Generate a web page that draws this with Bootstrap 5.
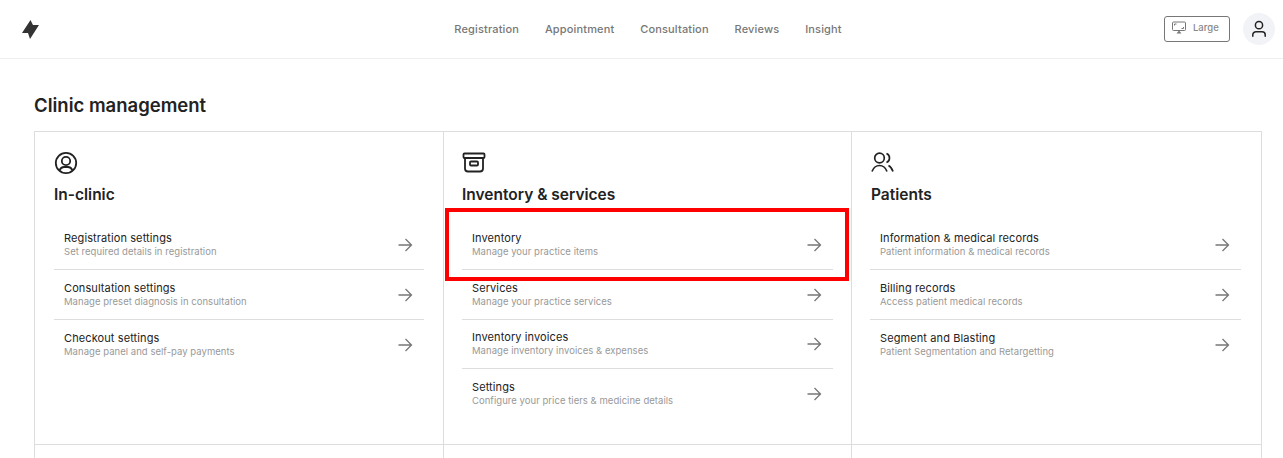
<!DOCTYPE html>
<html lang="en"><head><meta charset="utf-8"><title>Clinic management</title>
<link href="https://cdn.jsdelivr.net/npm/bootstrap@5.3.0/dist/css/bootstrap.min.css" rel="stylesheet">
<style>
html,body{height:458px;overflow:hidden;background:#fff}
body{font-family:Inter,"Liberation Sans",sans-serif;color:#222}
.topbar{height:59px;border-bottom:1px solid #eee;padding:0 8px 0 20px}
.toplink{font-size:11px;font-weight:500;color:#777;text-decoration:none;line-height:14px;letter-spacing:.15px}
.toplinks{gap:25.9px;padding-left:92px}
.sizebtn{width:66px;height:26px;border:1px solid #777;border-radius:3px;font-size:9.5px;font-weight:500;color:#888;gap:7px;padding:0 0 2px 7px}
.avatar{width:32px;height:32px;border-radius:50%;background:#f2f3f6;margin-left:13px}
.pagewrap{padding:35px 21px 0 34px}
.pagetitle{font-size:18.5px;font-weight:600;line-height:22px;color:#222;margin:0 0 15px}
.mgrid{display:grid;grid-template-columns:409px 408px 410px;border:1px solid #ddd;border-bottom:0;width:1228px}
.mcol{height:313px;padding:19px 19px 0 19px;border-right:1px solid #ddd;border-bottom:1px solid #ddd}
.mcol:nth-child(3n){border-right:0}
.mcol-mid{padding-left:18px;padding-right:18px}
.mcol-last{padding-left:18px;padding-right:21px}
.mcol-stub{height:13px;padding:0;border-bottom:0}
.micon{display:block;height:24px;margin:0 0 10px 0}
.mhead{font-size:15.5px;font-weight:600;line-height:20px;margin:0 0 15.5px;color:#222}
.mcol-last .mhead,.mcol-last .micon{margin-left:1px}
.mrow{height:49.5px;border-bottom:1px solid #ddd;padding:1px 11px 0 10px;color:#222;text-decoration:none;position:relative}
.mrow:last-child{border-bottom:0}
.mname{font-size:11px;font-weight:400;line-height:13px;color:#222;letter-spacing:.1px}
.mdesc{font-size:9.5px;line-height:12px;color:#999;margin-top:1px;letter-spacing:.04px}
.redbox{position:absolute;left:-17px;right:-16px;top:-13px;bottom:-12px;border:4px solid #f00;pointer-events:none}
</style></head><body>
<nav class="topbar d-flex align-items-center position-relative">
<svg width="20" height="20" viewBox="0 0 20 20"><path d="M10.500 1 L2 14 H8 L10 20 L19 6 H13 Z" fill="#333"/></svg>
<div class="toplinks d-flex mx-auto">
<a class="toplink" href="#">Registration</a><a class="toplink" href="#">Appointment</a><a class="toplink" href="#">Consultation</a><a class="toplink" href="#">Reviews</a><a class="toplink" href="#">Insight</a>
</div>
<div class="sizebtn d-flex align-items-center">
<svg width="14" height="14" viewBox="0 0 14 14" fill="none" stroke="#777"><rect x=".5" y="1" width="13" height="8.500" rx="1"/><path d="M2.500 4.500V3H4.500M11.500 6v1.500H9.500" stroke-width="1"/><path d="M7 9.500 4.500 12.500h5Z" fill="#777" stroke="none"/></svg>
<span>Large</span></div>
<div class="avatar d-flex align-items-center justify-content-center">
<svg width="20" height="20" viewBox="0 0 20 20" fill="none" stroke="#222" stroke-width="1.500"><circle cx="10" cy="6.200" r="3.600"/><path d="M3.800 17.200v-1.400c0-1.800 1.400-3 3.200-3h6c1.800 0 3.200 1.200 3.200 3v1.400" stroke-linecap="round"/></svg>
</div>
</nav>
<main class="pagewrap">
<h1 class="pagetitle">Clinic management</h1>
<div class="mgrid">
<section class="mcol">
<svg class="micon" width="24" height="24" viewBox="0 0 24 24" fill="none" stroke="#222" stroke-width="1.800"><circle cx="12" cy="12" r="10.200"/><circle cx="12" cy="10" r="4.200"/><path d="M5.500 19.500c1-2.500 3-3.500 4.500-3.500h4c1.500 0 3.500 1 4.500 3.500"/></svg>
<h2 class="mhead">In-clinic</h2>
<a class="mrow d-flex align-items-center justify-content-between" href="#"><div><div class="mname">Registration settings</div><div class="mdesc">Set required details in registration</div></div><svg width="16" height="16" viewBox="0 0 16 16" fill="none" stroke="#777" stroke-width="1.300"><path d="M1.500 8H14.500M8.500 2 14.500 8l-6 6"/></svg></a>
<a class="mrow d-flex align-items-center justify-content-between" href="#"><div><div class="mname">Consultation settings</div><div class="mdesc">Manage preset diagnosis in consultation</div></div><svg width="16" height="16" viewBox="0 0 16 16" fill="none" stroke="#777" stroke-width="1.300"><path d="M1.500 8H14.500M8.500 2 14.500 8l-6 6"/></svg></a>
<a class="mrow d-flex align-items-center justify-content-between" href="#"><div><div class="mname">Checkout settings</div><div class="mdesc">Manage panel and self-pay payments</div></div><svg width="16" height="16" viewBox="0 0 16 16" fill="none" stroke="#777" stroke-width="1.300"><path d="M1.500 8H14.500M8.500 2 14.500 8l-6 6"/></svg></a>
</section>
<section class="mcol mcol-mid">
<svg class="micon" width="24" height="24" viewBox="0 0 24 24" fill="none" stroke="#222" stroke-width="1.800"><rect x="1.500" y="2.500" width="21" height="4.500" rx="1"/><path d="M3 7V17.500a3 3 0 0 0 3 3H18a3 3 0 0 0 3-3V7"/><rect x="8" y="10.500" width="8" height="4" rx="1"/></svg>
<h2 class="mhead">Inventory &amp; services</h2>
<a class="mrow d-flex align-items-center justify-content-between" href="#"><div><div class="mname">Inventory</div><div class="mdesc">Manage your practice items</div></div><svg width="16" height="16" viewBox="0 0 16 16" fill="none" stroke="#777" stroke-width="1.300"><path d="M1.500 8H14.500M8.500 2 14.500 8l-6 6"/></svg><span class="redbox"></span></a>
<a class="mrow d-flex align-items-center justify-content-between" href="#"><div><div class="mname">Services</div><div class="mdesc">Manage your practice services</div></div><svg width="16" height="16" viewBox="0 0 16 16" fill="none" stroke="#777" stroke-width="1.300"><path d="M1.500 8H14.500M8.500 2 14.500 8l-6 6"/></svg></a>
<a class="mrow d-flex align-items-center justify-content-between" href="#"><div><div class="mname">Inventory invoices</div><div class="mdesc">Manage inventory invoices &amp; expenses</div></div><svg width="16" height="16" viewBox="0 0 16 16" fill="none" stroke="#777" stroke-width="1.300"><path d="M1.500 8H14.500M8.500 2 14.500 8l-6 6"/></svg></a>
<a class="mrow d-flex align-items-center justify-content-between" href="#"><div><div class="mname">Settings</div><div class="mdesc">Configure your price tiers &amp; medicine details</div></div><svg width="16" height="16" viewBox="0 0 16 16" fill="none" stroke="#777" stroke-width="1.300"><path d="M1.500 8H14.500M8.500 2 14.500 8l-6 6"/></svg></a>
</section>
<section class="mcol mcol-last">
<svg class="micon" width="24" height="24" viewBox="0 0 24 24" fill="none" stroke="#222" stroke-width="1.700"><circle cx="8.500" cy="7" r="4.800"/><path d="M15.500 2.500c2 .8 3 2.500 3 4.500s-1 3.700-3 4.500M1 20.500c1.500-4 4.200-6 7.500-6s6 2 7.500 6M17.500 14.500c2 1 3.500 3 4.500 6"/></svg>
<h2 class="mhead">Patients</h2>
<a class="mrow d-flex align-items-center justify-content-between" href="#"><div><div class="mname">Information &amp; medical records</div><div class="mdesc">Patient information &amp; medical records</div></div><svg width="16" height="16" viewBox="0 0 16 16" fill="none" stroke="#777" stroke-width="1.300"><path d="M1.500 8H14.500M8.500 2 14.500 8l-6 6"/></svg></a>
<a class="mrow d-flex align-items-center justify-content-between" href="#"><div><div class="mname">Billing records</div><div class="mdesc">Access patient medical records</div></div><svg width="16" height="16" viewBox="0 0 16 16" fill="none" stroke="#777" stroke-width="1.300"><path d="M1.500 8H14.500M8.500 2 14.500 8l-6 6"/></svg></a>
<a class="mrow d-flex align-items-center justify-content-between" href="#"><div><div class="mname">Segment and Blasting</div><div class="mdesc">Patient Segmentation and Retargetting</div></div><svg width="16" height="16" viewBox="0 0 16 16" fill="none" stroke="#777" stroke-width="1.300"><path d="M1.500 8H14.500M8.500 2 14.500 8l-6 6"/></svg></a>
</section>
<section class="mcol mcol-stub"></section><section class="mcol mcol-stub"></section><section class="mcol mcol-stub"></section>
</div>
</main>
<script src="https://cdn.jsdelivr.net/npm/bootstrap@5.3.0/dist/js/bootstrap.bundle.min.js"></script>
</body></html>
